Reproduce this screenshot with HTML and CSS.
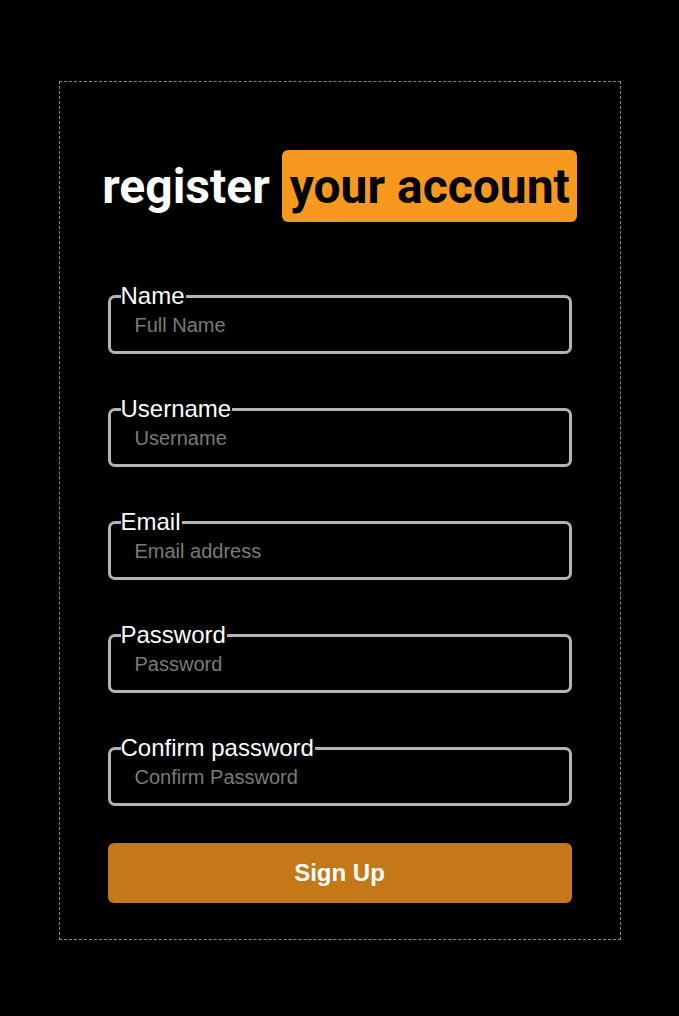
FILE: index.html
```html
<!DOCTYPE html>
<html>
<head>
<meta charset="utf-8">
<link rel="stylesheet" href="styles.css">
</head>
<body>
<div class="page">
  <form class="card">
    <h1 class="title">register <span class="hl">your account</span></h1>
    <fieldset class="field">
      <legend>Name</legend>
      <input type="text" placeholder="Full Name">
    </fieldset>
    <fieldset class="field">
      <legend>Username</legend>
      <input type="text" placeholder="Username">
    </fieldset>
    <fieldset class="field">
      <legend>Email</legend>
      <input type="email" placeholder="Email address">
    </fieldset>
    <fieldset class="field">
      <legend>Password</legend>
      <input type="password" placeholder="Password">
    </fieldset>
    <fieldset class="field">
      <legend>Confirm password</legend>
      <input type="password" placeholder="Confirm Password">
    </fieldset>
    <button type="button" class="btn">Sign Up</button>
  </form>
</div>
</body>
</html>
```
FILE: styles.css
```css
html, body {
  margin: 0;
  padding: 0;
  background: #000;
}
.page {
  width: 679px;
  height: 1016px;
  padding-top: 81px;
  box-sizing: border-box;
  display: flex;
  justify-content: center;
  align-items: flex-start;
}
.card {
  box-sizing: border-box;
  width: 562px;
  height: 859px;
  border: 1px dashed #8a8a8a;
  padding: 77px 48px 0 48px;
  display: flex;
  flex-direction: column;
  font-family: "Liberation Sans", Arial, sans-serif;
}
.title {
  margin: 0 -20px 69px -20px;
  text-align: center;
  font-family: Roboto, sans-serif;
  font-weight: 700;
  font-size: 48px;
  line-height: 56px;
  color: #fff;
  white-space: nowrap;
}
.hl {
  background: #f7981f;
  color: #000;
  padding: 8px 7px 7px 8px;
  border-radius: 6px;
}
.field {
  margin: 0 0 43px 0;
  padding: 0 12px 0 10px;
  border: 3px solid #b4b4b4;
  border-radius: 7px;
  height: 70px;
  box-sizing: border-box;
}
.field legend {
  padding: 0 1px 0 0;
  color: #fff;
  font-family: "Liberation Sans", Arial, sans-serif;
  font-size: 24px;
  line-height: 24px;
}
.field input {
  display: block;
  width: 100%;
  box-sizing: border-box;
  background: transparent;
  border: none;
  outline: none;
  color: #fff;
  font-family: "Liberation Sans", Arial, sans-serif;
  font-size: 20px;
  padding: 2px 0 0 14px;
  height: 32px;
  margin-top: 0;
}
.field input::placeholder {
  color: #7a7a7a;
}
.btn {
  margin-top: -6px;
  height: 60px;
  border: none;
  border-radius: 6px;
  background: #c57818;
  color: #fff;
  font-family: "Liberation Sans", Arial, sans-serif;
  font-weight: 700;
  font-size: 24px;
}
```
